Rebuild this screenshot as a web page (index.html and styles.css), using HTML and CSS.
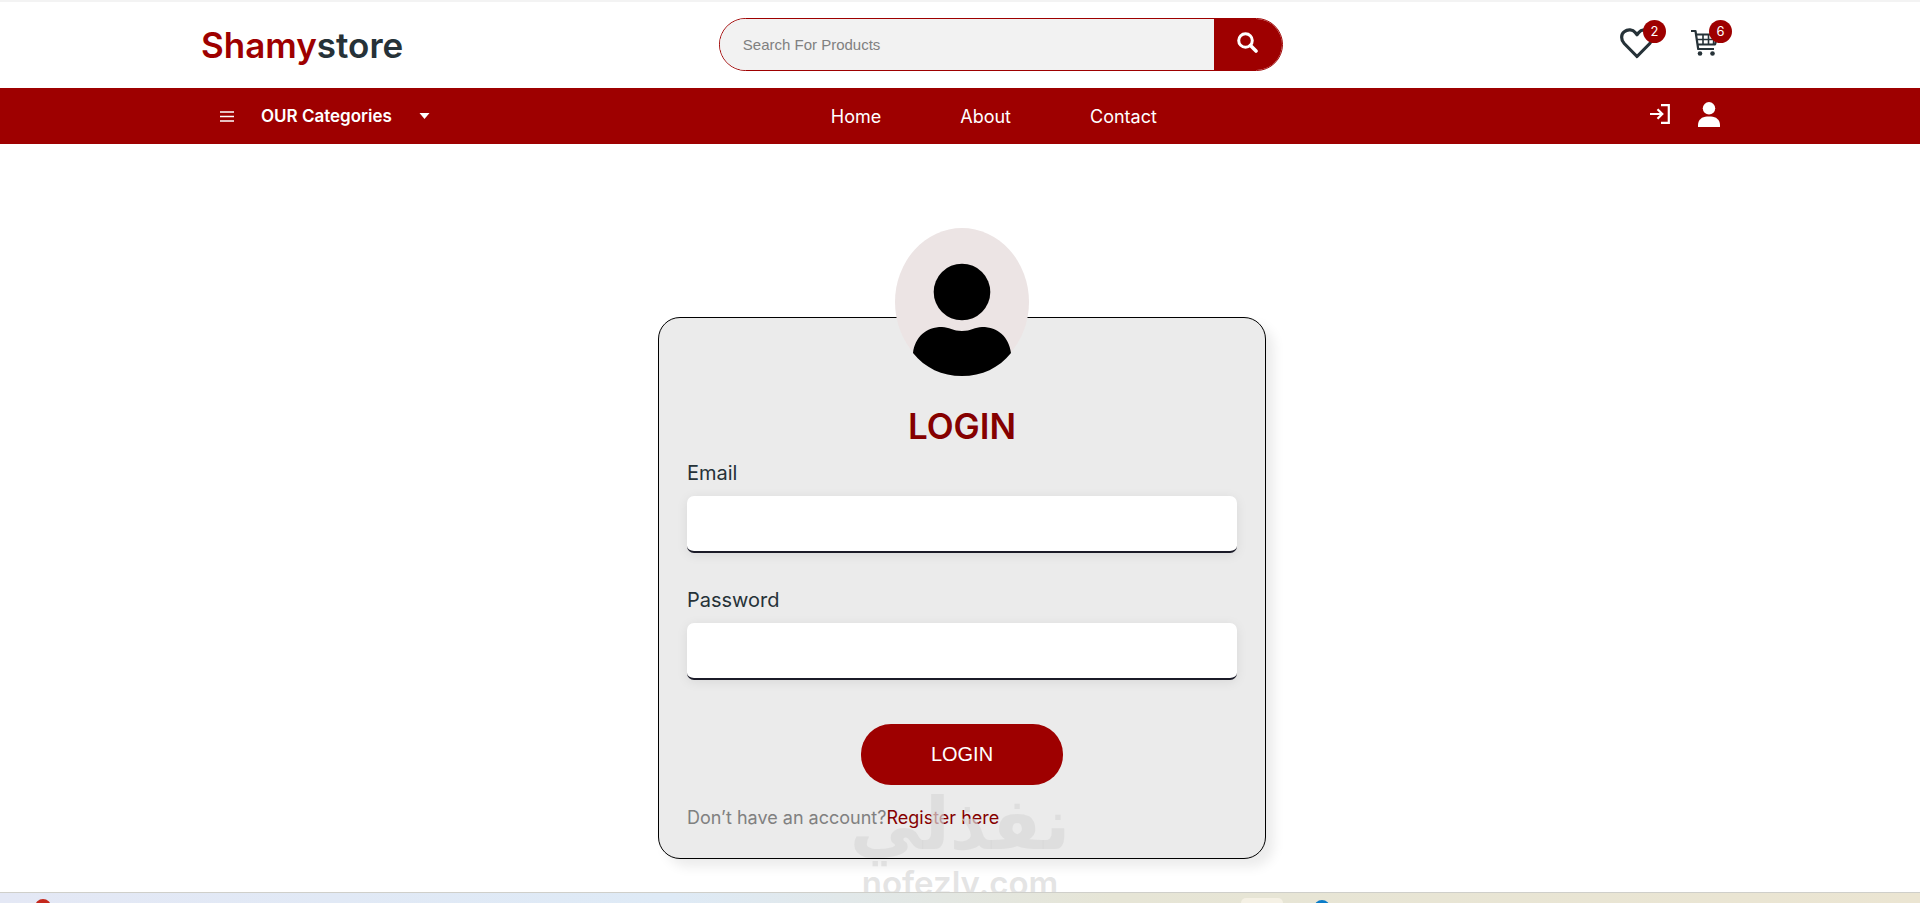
FILE: index.html
```
<!DOCTYPE html>
<html lang="en">
<head>
	<meta charset="UTF-8">
	<meta name="viewport" content="width=device-width, initial-scale=1.0">
	<title>Shamystore - Login</title>
	<link rel="stylesheet" href="styles.css">
</head>
<body>
	<header class="header">
		<div class="container">
			<a href="#" class="logo">Shamy<span>store</span></a>
			<form class="search">
				<input type="search" placeholder="Search For Products" aria-label="Search For Products">
				<button type="submit" aria-label="Search">
					<svg width="21" height="21" viewBox="0 0 21 21" fill="none" stroke="currentColor"><circle cx="8.5" cy="8.5" r="6.8" stroke-width="3"/><path d="M13.5 13.5l5.5 5.5" stroke-width="3.6" stroke-linecap="round"/></svg>
				</button>
			</form>
			<div class="actions">
				<a href="#" class="action" aria-label="Wishlist">
					<svg width="34" height="32" viewBox="0 0 34 32" fill="none" stroke="currentColor" stroke-width="3.2" stroke-linejoin="round"><path d="M17 28.5L4.2 15.5C.7 11.8.9 6.2 4.2 3.800 7.800.9 12.800 1.500 15.200 4.500L17 6.800l1.800-2.300C21.200 1.500 26.200.9 29.800 3.800c3.300 2.400 3.500 8 0 11.700z"/></svg>
					<span class="badge">2</span>
				</a>
				<a href="#" class="action" aria-label="Cart">
					<svg width="30" height="32" viewBox="0 0 30 32" fill="none" stroke="currentColor" stroke-width="2.2"><path d="M1 3h4.500l2.700 18H24M6 6.500h22l-3 10H8" stroke-linejoin="round"/><path d="M7 11.500h19.500M13 7v9M18.500 7v9M24 7l-.5 9" stroke-width="1.6"/><circle cx="10" cy="25.500" r="2.300" fill="currentColor" stroke="none"/><circle cx="22.500" cy="25.500" r="2.300" fill="currentColor" stroke="none"/></svg>
					<span class="badge">6</span>
				</a>
			</div>
		</div>
	</header>

	<nav class="nav">
		<div class="container">
			<button type="button" class="categories">
				<svg width="14" height="11" viewBox="0 0 14 11" stroke="currentColor" stroke-width="1.5"><path d="M0 1h14M0 5.5h14M0 10h14"/></svg>
				<span>OUR Categories</span>
				<svg width="11" height="6" viewBox="0 0 10 6" fill="currentColor"><path d="M0 0h10L5 6z"/></svg>
			</button>
			<ul class="links">
				<li><a href="#">Home</a></li>
				<li><a href="#">About</a></li>
				<li><a href="#">Contact</a></li>
			</ul>
			<div class="account">
				<a href="#" aria-label="Sign in">
					<svg width="20" height="20" viewBox="0 0 20 20" fill="none" stroke="currentColor" stroke-width="2.2"><path d="M11 1.2h7.8v17.6H11M0 10h12M7.500 5.200l4.800 4.800-4.800 4.800"/></svg>
				</a>
				<a href="#" aria-label="My account">
					<svg width="22" height="25" viewBox="0 0 22 25" fill="currentColor"><circle cx="11" cy="6.3" r="6.2"/><path d="M0 25v-2c0-5 4-8.500 9-8.500h4c5 0 9 3.500 9 8.500v2z"/></svg>
				</a>
			</div>
		</div>
	</nav>

	<main class="main">
		<form class="login">
			<svg class="avatar" viewBox="0 0 134 148">
				<ellipse cx="67" cy="74" rx="67" ry="74" fill="#ece4e4"/>
				<circle cx="67" cy="64" r="28.3"/>
				<path d="M18 125C20 109 31 99 47 99c7 0 11 4 20 4s13-4 20-4c16 0 27 10 29 26-12 15-29 23-49 23s-37-8-49-23z"/>
			</svg>
			<h1>LOGIN</h1>
			<div class="field">
				<label for="email">Email</label>
				<input type="email" id="email">
			</div>
			<div class="field">
				<label for="password">Password</label>
				<input type="password" id="password">
			</div>
			<button type="submit" class="submit">LOGIN</button>
			<p class="register">Don’t have an account?<a href="#">Register here</a></p>
		</form>
		<div class="watermark">
			<span lang="ar" dir="rtl">نفذلي</span>
			<span>nofezly.com</span>
		</div>
	</main>

	<footer class="taskbar">
		<i class="dot red"></i>
		<i class="tile"></i>
		<i class="dot blue"></i>
	</footer>
</body>
</html>
```
FILE: styles.css
```
* { box-sizing: border-box; }
body { margin: 0; min-height: 100vh; display: flex; flex-direction: column; background-color: #fff; color: #263238; font-family: Inter, "Liberation Sans", sans-serif; font-size: 18px; overflow: hidden; }
a { color: inherit; text-decoration: none; }
button { border: 0; padding: 0; background: none; color: inherit; font-family: inherit; cursor: pointer; }
svg { display: block; }

.container { width: 100%; max-width: 1520px; margin: 0 auto; display: grid; grid-template-columns: 34% 1fr 28%; align-items: center; }

.header { border-top: 2px solid #f3f3f3; padding: 16px 0 17px; }
.logo { padding-left: 1px; font-size: 35px; font-weight: 600; color: #9e0000; }
.logo span { color: #263238; }

.search { display: flex; width: 564px; max-width: 100%; height: 53px; margin-left: 2px; border: 1px solid #9e0000; border-radius: 27px; overflow: hidden; }
.search input { flex: 1; min-width: 0; border: 0; padding: 0 23px; background-color: #f2f2f2; font-family: "Liberation Sans", sans-serif; font-size: 15px; }
.search input::placeholder { color: #808080; }
.search button { width: 68px; padding: 0 0 4px 23px; background-color: #9e0000; color: #fff; }

.actions { display: flex; justify-content: flex-end; align-items: center; gap: 36px; padding-bottom: 1px; }
.action { position: relative; }
.badge { position: absolute; top: -8px; right: -12px; width: 23px; height: 23px; border-radius: 50%; background-color: #9e0000; color: #fff; font-size: 13px; line-height: 23px; text-align: center; }

.nav { background-color: #9e0000; color: #fff; }
.nav .container { height: 56px; }
.categories { display: flex; align-items: center; gap: 27px; padding-left: 20px; font-size: 17px; font-weight: 600; }
.links { display: flex; gap: 79px; margin: 0; padding: 0 0 0 114px; list-style: none; }
.account { display: flex; justify-content: flex-end; align-items: center; gap: 28px; padding-bottom: 4px; }

.main { position: relative; flex: 1; padding: 173px 0 33px 4px; }
.login { position: relative; width: 608px; max-width: 100%; margin: 0 auto; padding: 86px 28px 28px; border: 1px solid #000; border-radius: 22px; background-color: #ebebeb; box-shadow: 8px 8px 12px rgba(0, 0, 0, 0.08); }
.avatar { position: absolute; top: -90px; left: 50%; width: 134px; height: 148px; transform: translateX(-50%); }
.login h1 { margin: 0 0 13px; font-size: 35px; font-weight: 600; line-height: 44px; text-align: center; color: #850000; }
.field { margin-bottom: 35px; }
.field label { display: block; margin-bottom: 11px; font-size: 20px; line-height: 24px; }
.field input { display: block; width: 100%; height: 57px; padding: 0 16px; border: 0; border-bottom: 2px solid #1b1b28; border-radius: 7px; background-color: #fff; font-size: 18px; box-shadow: 0 2px 12px rgba(0, 0, 0, 0.08); }
.submit { display: block; width: 202px; height: 61px; margin: 44px auto 21px; border-radius: 30px; background-color: #9e0000; color: #fff; font-family: "Liberation Sans", sans-serif; font-size: 20px; }
.register { margin: 0; line-height: 24px; color: #808080; }
.register a { color: #850000; }

.watermark { position: absolute; bottom: -10px; left: 50%; transform: translateX(-50%); display: flex; flex-direction: column; align-items: center; color: rgba(216, 216, 216, 0.7); font-weight: 600; font-size: 33px; line-height: 38px; pointer-events: none; }
.watermark span:first-child { font-family: "DejaVu Sans", sans-serif; font-weight: 700; font-size: 72px; line-height: 80px; }

.taskbar { position: relative; display: flex; height: 11px; border-top: 1px solid #cfcfca; background: linear-gradient(90deg, #e4e8f5, #deeaf6 35%, #e6e5d6 58%, #ebe5d2); overflow: hidden; }
.dot { width: 16px; height: 16px; border-radius: 50%; }
.red { margin: 6px 0 0 35px; background-color: #c4281c; }
.tile { width: 42px; height: 30px; margin: 5px 0 0 1190px; border-radius: 5px; background-color: #f5f1e5; }
.blue { margin: 7px 0 0 31px; background-color: #0a7cc9; }
```
